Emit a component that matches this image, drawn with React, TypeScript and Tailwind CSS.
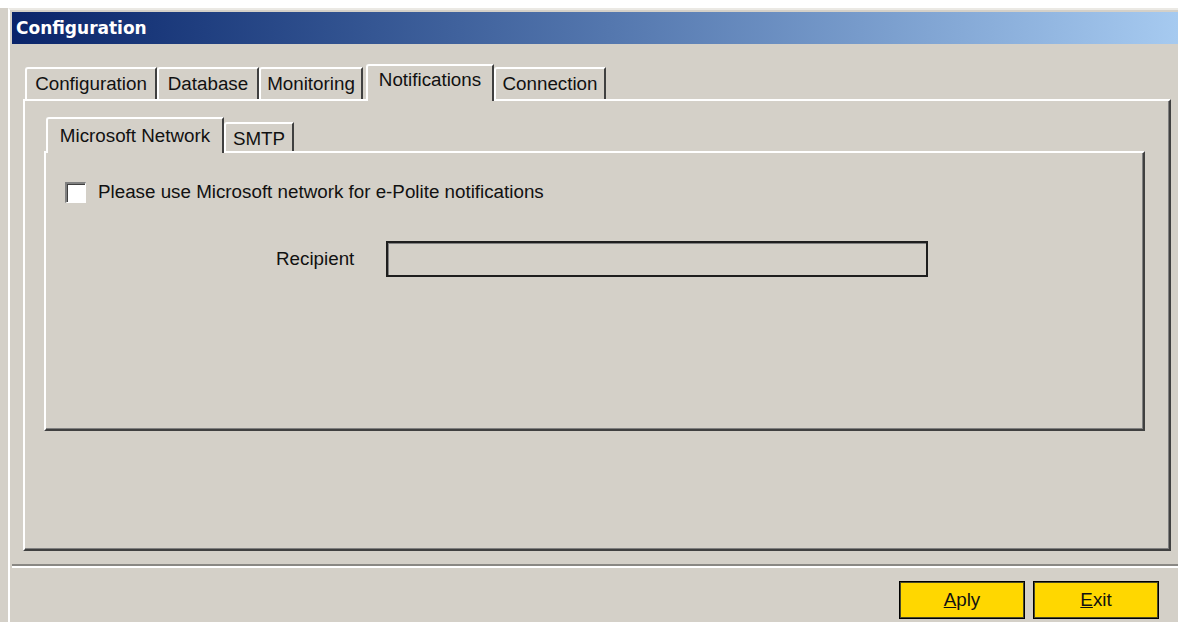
import React from "react";

type TabDef = { label: string; width: number };

const outerTabs: TabDef[] = [
  { label: "Configuration", width: 132 },
  { label: "Database", width: 102 },
  { label: "Monitoring", width: 104 },
  { label: "Notifications", width: 128 },
  { label: "Connection", width: 112 },
];

function OuterTab({ tab, selected }: { tab: TabDef; selected: boolean }) {
  if (selected) {
    return (
      <div
        style={{ width: tab.width }}
        className="relative z-10 -mb-[2px] ml-[3px] flex h-[37px] items-start justify-center rounded-tl-[3px] border-l-2 border-t-2 border-r-2 border-l-white border-t-white border-r-[#404040] bg-[#d4d0c8] pt-[5px]"
      >
        {tab.label}
      </div>
    );
  }
  return (
    <div
      style={{ width: tab.width }}
      className="flex h-[32px] items-start justify-center rounded-tl-[3px] border-l-2 border-t-2 border-r-2 border-l-white border-t-white border-r-[#404040] bg-[#d4d0c8] pt-[6px]"
    >
      {tab.label}
    </div>
  );
}

export default function App() {
  return (
    <div className="flex h-[622px] w-[1178px] flex-col overflow-hidden bg-[#d4d0c8] font-['Liberation_Sans',Arial,sans-serif] text-[18.8px] leading-none text-[#111]">
      <div className="h-[8px] shrink-0 bg-white" />
      <div className="ml-[8px] flex flex-1 flex-col border-l-2 border-t-2 border-l-white border-t-[#ebe9e4] pl-[2px] pt-[2px]">
        {/* caption bar */}
        <div className="flex h-[32px] shrink-0 items-center bg-gradient-to-r from-[#0a246a] to-[#a6caf0] pl-[4px] font-['DejaVu_Sans',sans-serif] text-[17px] font-bold text-white">
          Configuration
        </div>

        {/* outer tab control */}
        <div className="flex flex-col pl-[11px] pr-[7px] pt-[20px]">
          <div className="flex h-[35px] items-end pl-[2px]">
            {outerTabs.map((t) => (
              <OuterTab key={t.label} tab={t} selected={t.label === "Notifications"} />
            ))}
          </div>
          <div className="h-[452px] border-l-2 border-t-2 border-b-2 border-r-2 border-l-white border-t-white border-b-[#404040] border-r-[#404040] pl-[19px] pr-[24px] pt-[16px] shadow-[inset_-1px_-1px_#808080]">
            {/* inner tab control */}
            <div className="flex h-[34px] items-end pl-[2px]">
              <div className="relative z-10 -mb-[2px] flex h-[36px] w-[178px] items-start justify-center rounded-tl-[3px] border-l-2 border-t-2 border-r-2 border-l-white border-t-white border-r-[#404040] bg-[#d4d0c8] pt-[8px]">
                Microsoft Network
              </div>
              <div className="flex h-[29px] w-[70px] items-start justify-center rounded-tl-[3px] border-l-2 border-t-2 border-r-2 border-l-white border-t-white border-r-[#404040] bg-[#d4d0c8] pt-[6px]">
                SMTP
              </div>
            </div>
            <div className="h-[280px] border-l-2 border-t-2 border-b-2 border-r-2 border-l-white border-t-white border-b-[#404040] border-r-[#404040] pl-[19px] pt-[29px] shadow-[inset_-1px_-1px_#808080]">
              <div className="flex items-center">
                <div className="h-[21px] w-[21px] border-l-2 border-t-2 border-b border-r border-l-[#808080] border-t-[#808080] border-b-white border-r-white bg-white shadow-[inset_1px_1px_#404040]" />
                <span className="ml-[12px]">Please use Microsoft network for e-Polite notifications</span>
              </div>
              <div className="mt-[38px] flex items-center pl-[211px]">
                <span className="w-[110px]">Recipient</span>
                <div className="h-[36px] w-[542px] border-2 border-[#1e1e1e] bg-[#d4d0c8] shadow-[inset_1px_1px_#808080]" />
              </div>
            </div>
          </div>
        </div>

        {/* separator */}
        <div className="mt-[13px] h-[4px] border-t-2 border-b-2 border-t-[#8a8884] border-b-white" />

        {/* buttons */}
        <div className="mt-[13px] flex justify-end gap-[8px] pr-[19px]">
          <button className="flex h-[38px] w-[126px] items-center justify-center border border-black bg-[#ffd700] shadow-[inset_0_0_0_1px_#4a4a2a]">
            <span>
              <span className="underline underline-offset-1">A</span>ply
            </span>
          </button>
          <button className="flex h-[38px] w-[126px] items-center justify-center border border-black bg-[#ffd700] shadow-[inset_0_0_0_1px_#4a4a2a]">
            <span>
              <span className="underline underline-offset-1">E</span>xit
            </span>
          </button>
        </div>
      </div>
    </div>
  );
}
